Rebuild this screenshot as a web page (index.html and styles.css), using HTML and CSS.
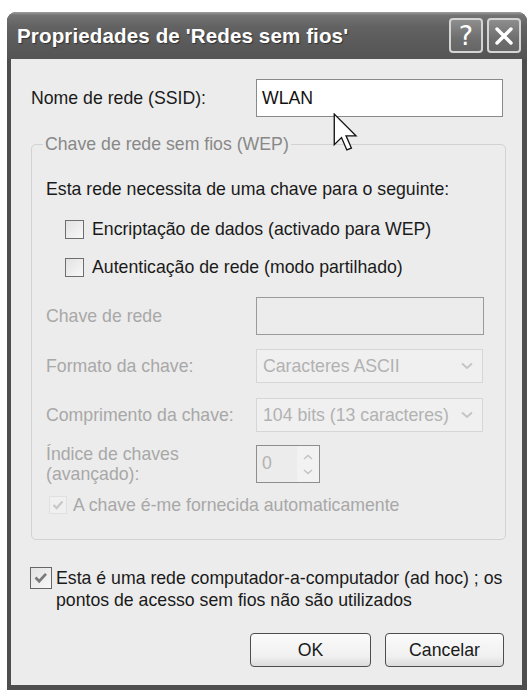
FILE: index.html
```html
<!DOCTYPE html>
<html lang="pt">
<head>
<meta charset="utf-8">
<title>Propriedades de 'Redes sem fios'</title>
<link rel="stylesheet" href="styles.css">
</head>
<body>
<div class="window">
  <div class="titlebar">
    <span class="title">Propriedades de 'Redes sem fios'</span>
    <div class="tbtns">
      <span class="tbtn help">?</span>
      <span class="tbtn close">
        <svg viewBox="0 0 30 30" width="30" height="30"><path d="M8 8 L22 22 M22 8 L8 22" stroke="#fff" stroke-width="3.4" stroke-linecap="round" fill="none"/></svg>
      </span>
    </div>
  </div>
  <div class="client">
    <div class="name-row">
      <span class="lbl">Nome de rede (SSID):</span>
      <div class="field name-field">WLAN</div>
    </div>
    <fieldset class="group">
      <legend>Chave de rede sem fios (WEP)</legend>
      <p class="intro">Esta rede necessita de uma chave para o seguinte:</p>
      <div class="check c1"><span class="box"></span><span>Encriptação de dados (activado para WEP)</span></div>
      <div class="check c2"><span class="box"></span><span>Autenticação de rede (modo partilhado)</span></div>
      <div class="frow r-key">
        <span class="lbl dis">Chave de rede</span>
        <div class="field key-field"></div>
      </div>
      <div class="frow r-fmt">
        <span class="lbl dis">Formato da chave:</span>
        <div class="select"><span>Caracteres ASCII</span><span class="arrow"><svg viewBox="0 0 12 8" width="12" height="8"><path d="M1 1.5 L6 6 L11 1.5" stroke="#c4c4c4" stroke-width="1.8" fill="none"/></svg></span></div>
      </div>
      <div class="frow r-len">
        <span class="lbl dis">Comprimento da chave:</span>
        <div class="select"><span>104 bits (13 caracteres)</span><span class="arrow"><svg viewBox="0 0 12 8" width="12" height="8"><path d="M1 1.5 L6 6 L11 1.5" stroke="#c4c4c4" stroke-width="1.8" fill="none"/></svg></span></div>
      </div>
      <div class="frow r-idx">
        <span class="lbl dis">Índice de chaves<br>(avançado):</span>
        <div class="spin">
          <span class="spin-val">0</span>
          <span class="spin-btns">
            <svg viewBox="0 0 10 6" width="10" height="6"><path d="M1 5 L5 1.5 L9 5" stroke="#c4c4c4" stroke-width="1.6" fill="none"/></svg>
            <svg viewBox="0 0 10 6" width="10" height="6"><path d="M1 1 L5 4.5 L9 1" stroke="#c4c4c4" stroke-width="1.6" fill="none"/></svg>
          </span>
        </div>
      </div>
      <div class="check auto">
        <span class="box dis-box"><svg viewBox="0 0 18 18" width="18" height="18"><path d="M4 9 L7.5 12.5 L14 5" stroke="#c8c8c8" stroke-width="2.6" fill="none"/></svg></span>
        <span class="dis">A chave é-me fornecida automaticamente</span>
      </div>
    </fieldset>
    <div class="adhoc">
      <span class="box big"><svg viewBox="0 0 22 22" width="20" height="20"><path d="M5 10.5 L9 14.5 L16.5 6.5" stroke="#7a7a7a" stroke-width="3" fill="none"/></svg></span>
      <span class="adhoc-text">Esta é uma rede computador-a-computador (ad hoc) ; os<br>pontos de acesso sem fios não são utilizados</span>
    </div>
    <div class="buttons">
      <span class="btn ok">OK</span>
      <span class="btn cancel">Cancelar</span>
    </div>
  </div>
  <svg class="cursor" viewBox="0 0 13 21" width="25" height="40"><path d="M0.6 0.6 L0.6 16.6 L4.4 12.9 L7.2 19.4 L9.6 18.4 L6.8 12 L12 12 Z" fill="#fff" stroke="#111" stroke-width="0.7" stroke-linejoin="miter"/></svg>
</div>
</body>
</html>
```

FILE: styles.css
```css
* { box-sizing: border-box; }

body {
  margin: 0;
  background: #ffffff;
  font-family: "Liberation Sans", Arial, sans-serif;
  font-size: 17.7px;
  color: #1a1a1a;
}

.window {
  position: relative;
  margin: 12px 0 0 7px;
  width: 520px;
  height: 678px;
  background: #4e4e4e;
  border-radius: 9px 9px 0 0;
  display: flex;
  flex-direction: column;
}

.titlebar {
  height: 47px;
  flex: none;
  display: flex;
  align-items: center;
  justify-content: space-between;
  padding: 0 6px 0 10px;
  border-radius: 9px 9px 0 0;
  background: linear-gradient(#a0a0a0 0px, #747474 3px, #636363 30%, #595959 70%, #545454 100%);
}

.title {
  color: #ffffff;
  font-weight: bold;
  font-size: 20.6px;
  letter-spacing: 0.1px;
  text-shadow: 1px 1px 1px #333333;
}

.tbtns {
  display: flex;
  gap: 4px;
}

.tbtn {
  width: 34px;
  height: 35px;
  border: 2px solid #d4d4d4;
  border-radius: 4px;
  background: linear-gradient(#8e8e8e, #6e6e6e 60%, #666666);
  display: flex;
  align-items: center;
  justify-content: center;
  color: #ffffff;
}

.help {
  font-size: 27px;
  font-family: "DejaVu Sans", sans-serif;
}

.client {
  flex: 1;
  margin: 0 5px 5px 4px;
  background: #ececec;
  padding: 20px 16px 0 20px;
}

.name-row {
  display: grid;
  grid-template-columns: 225px 247px;
  height: 38px;
  align-items: center;
}

.field {
  border: 1px solid #8a8a8a;
  display: flex;
  align-items: center;
}

.name-field {
  height: 38px;
  background: #ffffff;
  padding-left: 5px;
  color: #111111;
}

.group {
  margin: 17px 0 0 0;
  width: 475px;
  border: 1px solid #d2d2d2;
  border-radius: 5px;
  padding: 25px 0 24px 14px;
}

.group legend {
  padding: 0 2px;
  margin-left: -3px;
  line-height: 20px;
  color: #888888;
}

.intro {
  margin: 0;
  line-height: 20px;
}

.check {
  display: flex;
  align-items: center;
  gap: 8px;
  height: 22px;
}

.c1 { margin: 19px 0 0 19px; }
.c2 { margin: 16px 0 0 19px; }

.box {
  width: 19px;
  height: 19px;
  flex: none;
  border: 1px solid #6e6e6e;
  background: linear-gradient(135deg, #e2e2e2, #f8f8f8);
  display: flex;
  align-items: center;
  justify-content: center;
}

.frow {
  display: grid;
  grid-template-columns: 210px auto;
  align-items: center;
}

.lbl.dis, .dis {
  color: #a8a8a8;
}

.r-key { margin-top: 19px; }
.r-fmt { margin-top: 14px; }
.r-len { margin-top: 15px; }
.r-idx { margin-top: 12px; align-items: start; }

.r-idx .lbl {
  line-height: 20px;
}

.key-field {
  width: 228px;
  height: 38px;
  border-color: #9a9a9a;
}

.select {
  width: 227px;
  height: 34px;
  border: 1px solid #d6d6d6;
  background: #f0f0f0;
  display: flex;
  align-items: center;
  justify-content: space-between;
  padding-left: 6px;
  color: #b2b2b2;
}

.arrow {
  width: 30px;
  height: 100%;
  display: flex;
  align-items: center;
  justify-content: center;
}

.spin {
  margin-top: 1px;
  width: 64px;
  height: 38px;
  border: 1px solid #8e8e8e;
  display: flex;
  justify-content: space-between;
  color: #b2b2b2;
}

.spin-val {
  padding: 7px 0 0 5px;
}

.spin-btns {
  width: 22px;
  background: #f2f2f2;
  display: flex;
  flex-direction: column;
  align-items: center;
  justify-content: center;
  gap: 9px;
}

.auto {
  margin: 11px 0 0 3px;
  height: 20px;
  gap: 6px;
}

.dis-box {
  width: 18px;
  height: 18px;
  border-color: #e0e0e0;
  background: #f0f0f0;
}

.adhoc {
  margin: 27px 0 0 -1px;
  display: flex;
  align-items: flex-start;
  gap: 4px;
}

.box.big {
  width: 22px;
  height: 22px;
  border: 1.5px solid #666666;
}

.adhoc-text {
  line-height: 22px;
  white-space: nowrap;
}

.buttons {
  margin: 22px 2px 0 0;
  display: flex;
  justify-content: flex-end;
  gap: 14px;
}

.btn {
  height: 34px;
  border: 1.5px solid #4e4e4e;
  border-radius: 4px;
  background: linear-gradient(#fbfbfb, #f0f0f0 70%, #dcdcdc);
  display: flex;
  align-items: center;
  justify-content: center;
  color: #1a1a1a;
}

.ok { width: 121px; }
.cancel { width: 119px; }

.cursor {
  position: absolute;
  left: 326px;
  top: 101px;
}
```
